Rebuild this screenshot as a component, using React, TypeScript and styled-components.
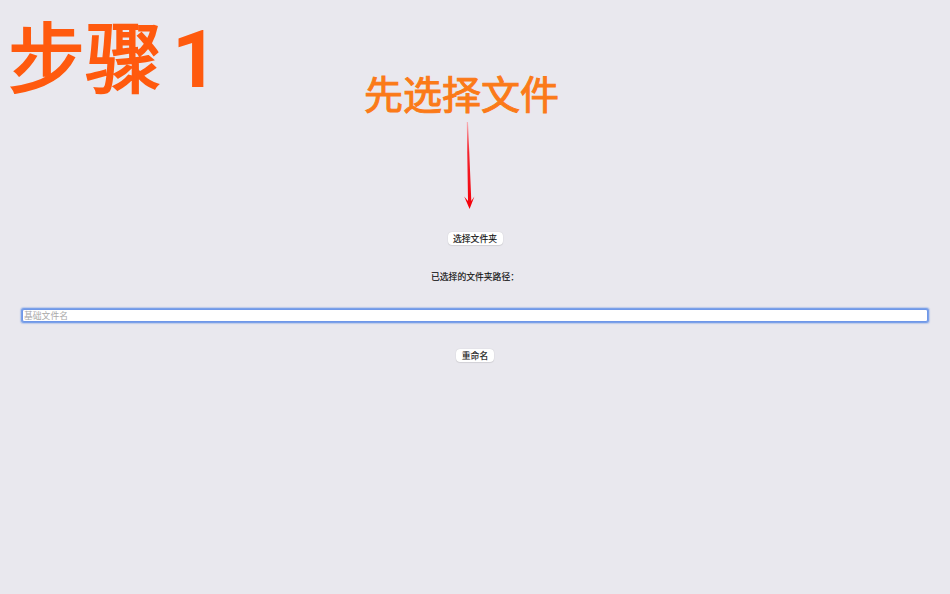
import styled, { createGlobalStyle } from 'styled-components';

const GlobalStyle = createGlobalStyle`
	html, body {
		margin: 0;
		padding: 0;
		height: 100%;
		background-color: #e9e8ee;
	}
	body {
		font-family: "Liberation Sans", "Noto Sans CJK SC", sans-serif;
		color: #111;
	}
`;

const Page = styled.div`
	position: relative;
	height: 594px;
	overflow: hidden;
	display: flex;
	flex-direction: column;
	align-items: center;
	padding-top: 232px;
	box-sizing: border-box;
`;

const StepLabel = styled.div`
	position: absolute;
	left: 8px;
	top: 15px;
	font-family: "Liberation Sans", "Noto Sans CJK SC", sans-serif;
	font-size: 77px;
	line-height: 90px;
	font-weight: 400;
	-webkit-text-stroke: 2px #ff5a0e;
	color: #ff5a0e;
	white-space: nowrap;
`;

const StepNumber = styled.span`
	margin-left: 10px;
	font-family: Roboto, sans-serif;
	font-size: 80px;
	font-weight: 700;
	-webkit-text-stroke: 0;
`;

const Hint = styled.div`
	position: absolute;
	left: 364px;
	top: 64px;
	font-family: "Noto Sans CJK SC", sans-serif;
	font-size: 39px;
	line-height: 56px;
	font-weight: 400;
	-webkit-text-stroke: 1px #fb7a18;
	color: #fb7a18;
	white-space: nowrap;
`;

const Arrow = styled.svg`
	position: absolute;
	left: 460px;
	top: 120px;
	width: 20px;
	height: 92px;
`;

const Button = styled.button`
	height: 13px;
	padding: 0 5.5px;
	border: none;
	border-radius: 4px;
	background-color: #fff;
	box-shadow: 0 0 1px rgba(0, 0, 0, 0.2), 0 1px 1px rgba(0, 0, 0, 0.08);
	font-family: "Noto Sans CJK SC", sans-serif;
	font-size: 8.8px;
	line-height: 12px;
	-webkit-text-stroke: 0.15px #111;
	color: #111;
`;

const PathLabel = styled.p`
	margin: 25px 0 0;
	font-family: "Noto Sans CJK SC", sans-serif;
	font-size: 8.8px;
	line-height: 14px;
	height: 14px;
	-webkit-text-stroke: 0.15px #111;
`;

const NameInput = styled.input`
	display: block;
	box-sizing: border-box;
	width: 906px;
	height: 13px;
	margin: 25px 0 27px;
	padding: 0 1px;
	border: 1px solid #6f97e8;
	border-radius: 2px;
	background-color: #fff;
	box-shadow: 0 0 0 1px #7ba1e8, 0 0 1px 1.5px rgba(123, 161, 232, 0.4);
	outline: none;
	font-family: "Noto Sans CJK SC", sans-serif;
	font-size: 8.8px;

	&::placeholder {
		color: #a9a9a9;
		opacity: 1;
	}
`;

const App = () => {
	return (
		<Page>
			<GlobalStyle />
			<StepLabel>
				步骤<StepNumber>1</StepNumber>
			</StepLabel>
			<Hint>先选择文件</Hint>
			<Arrow viewBox="0 0 20 92">
				<defs>
					<linearGradient id="arrowFade" x1="0" y1="0" x2="0" y2="1">
						<stop offset="0" stopColor="#f7b0b6" />
						<stop offset="0.35" stopColor="#f4222c" />
						<stop offset="1" stopColor="#f40009" />
					</linearGradient>
				</defs>
				<path
					d="M6.8 2 L8 2 L11.3 81 L14.4 76.5 L9.6 89 L4.2 76.5 L8 81 Z"
					fill="url(#arrowFade)"
				/>
			</Arrow>
			<Button>选择文件夹</Button>
			<PathLabel>已选择的文件夹路径：</PathLabel>
			<NameInput placeholder="基础文件名" />
			<Button>重命名</Button>
		</Page>
	);
};

export default App;
